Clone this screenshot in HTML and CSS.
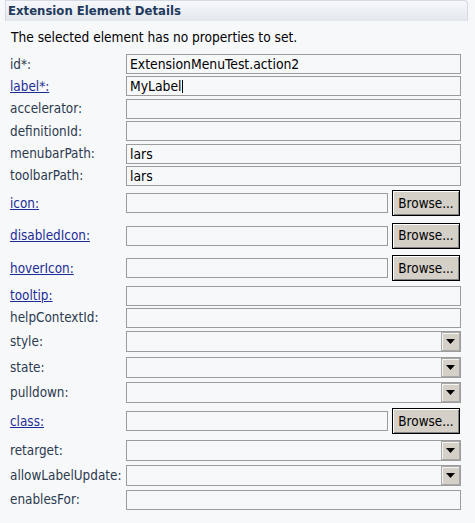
FILE: index.html
```html
<!DOCTYPE html>
<html>
  <head>
    <meta charset="UTF-8">
    <link rel="stylesheet" href="styles.css">
  </head>
  <body>
    <div class="section-head">Extension Element Details</div>
    <p class="section-desc">The selected element has no properties to set.</p>

    <div class="details">
      <span class="lbl">id*:</span>
      <div class="text">ExtensionMenuTest.action2</div>

      <a class="lbl link" href="#label">label*:</a>
      <div class="text">MyLabel<span class="caret"></span></div>

      <span class="lbl">accelerator:</span>
      <div class="text"></div>

      <span class="lbl">definitionId:</span>
      <div class="text"></div>

      <span class="lbl">menubarPath:</span>
      <div class="text">lars</div>

      <span class="lbl">toolbarPath:</span>
      <div class="text">lars</div>

      <a class="lbl link" href="#icon">icon:</a>
      <div class="browse-row">
        <div class="text"></div>
        <button class="browse">Browse...</button>
      </div>

      <a class="lbl link" href="#disabledIcon">disabledIcon:</a>
      <div class="browse-row">
        <div class="text"></div>
        <button class="browse">Browse...</button>
      </div>

      <a class="lbl link" href="#hoverIcon">hoverIcon:</a>
      <div class="browse-row">
        <div class="text"></div>
        <button class="browse">Browse...</button>
      </div>

      <a class="lbl link" href="#tooltip">tooltip:</a>
      <div class="text"></div>

      <span class="lbl">helpContextId:</span>
      <div class="text"></div>

      <span class="lbl">style:</span>
      <div class="combo-row"><div class="combo"><span class="drop"><svg width="9" height="5" viewBox="0 0 9 5"><polygon points="0,0 9,0 4.5,5" fill="#000"/></svg></span></div></div>

      <span class="lbl">state:</span>
      <div class="combo-row"><div class="combo"><span class="drop"><svg width="9" height="5" viewBox="0 0 9 5"><polygon points="0,0 9,0 4.5,5" fill="#000"/></svg></span></div></div>

      <span class="lbl">pulldown:</span>
      <div class="combo-row"><div class="combo"><span class="drop"><svg width="9" height="5" viewBox="0 0 9 5"><polygon points="0,0 9,0 4.5,5" fill="#000"/></svg></span></div></div>

      <a class="lbl link" href="#class">class:</a>
      <div class="browse-row">
        <div class="text"></div>
        <button class="browse">Browse...</button>
      </div>

      <span class="lbl">retarget:</span>
      <div class="combo-row"><div class="combo"><span class="drop"><svg width="9" height="5" viewBox="0 0 9 5"><polygon points="0,0 9,0 4.5,5" fill="#000"/></svg></span></div></div>

      <span class="lbl">allowLabelUpdate:</span>
      <div class="combo-row"><div class="combo"><span class="drop"><svg width="9" height="5" viewBox="0 0 9 5"><polygon points="0,0 9,0 4.5,5" fill="#000"/></svg></span></div></div>

      <span class="lbl">enablesFor:</span>
      <div class="text"></div>
    </div>
  </body>
</html>
```

FILE: styles.css
```css
body {
  margin: 0;
  background: #f7f8fa;
  font-family: "DejaVu Sans Condensed", "DejaVu Sans", sans-serif;
  font-size: 13.4px;
  color: #000;
}

.section-head {
  margin-left: 5px;
  width: 459px;
  height: 20px;
  padding-left: 2px;
  border: 1px solid #d3dae3;
  border-bottom: none;
  border-top-right-radius: 4px;
  background: linear-gradient(#f6f8fa, #e3e8ee);
  color: #1f3a5c;
  font-weight: bold;
  font-size: 13px;
  line-height: 19px;
}

.section-desc {
  margin: 8px 0 0 11px;
  height: 16px;
  line-height: 16px;
  font-size: 13.6px;
}

.details {
  display: grid;
  grid-template-columns: 116px 335px;
  row-gap: 2.4px;
  align-items: center;
  margin-top: 9px;
  padding-left: 10px;
}

.lbl {
  color: #2c3a4e;
  white-space: nowrap;
}

.lbl.link {
  color: #1c2c96;
  text-decoration: underline;
}

.text {
  box-sizing: border-box;
  height: 20px;
  border: 1px solid #9c9c9c;
  background: #f7f8fa;
  padding-left: 3px;
  line-height: 18px;
  white-space: nowrap;
  font-size: 13.8px;
}

.caret {
  display: inline-block;
  width: 0;
  height: 13px;
  border-left: 1px solid #000;
  vertical-align: -2px;
}

.browse-row {
  display: flex;
  align-items: center;
  height: 30px;
}

.browse-row .text {
  width: 262px;
}

.browse {
  box-sizing: border-box;
  width: 68px;
  height: 26px;
  margin-left: 4px;
  padding: 0;
  border: 1px solid #000;
  background: #d4d0c8;
  box-shadow: inset 1px 1px #fff, inset -1px -1px #808080;
  font-family: inherit;
  font-size: 13.4px;
  color: #000;
}

.combo-row {
  display: flex;
  align-items: center;
  height: 23px;
}

.combo {
  box-sizing: border-box;
  display: flex;
  justify-content: flex-end;
  width: 100%;
  height: 21px;
  border: 1px solid #9c9c9c;
  background: #f7f8fa;
}

.drop {
  box-sizing: border-box;
  display: flex;
  align-items: center;
  justify-content: center;
  width: 19px;
  height: 19px;
  border: 1px solid #a8a8a8;
  background: #d4d0c8;
  box-shadow: inset 1px 1px #f4f3ef;
}
```
